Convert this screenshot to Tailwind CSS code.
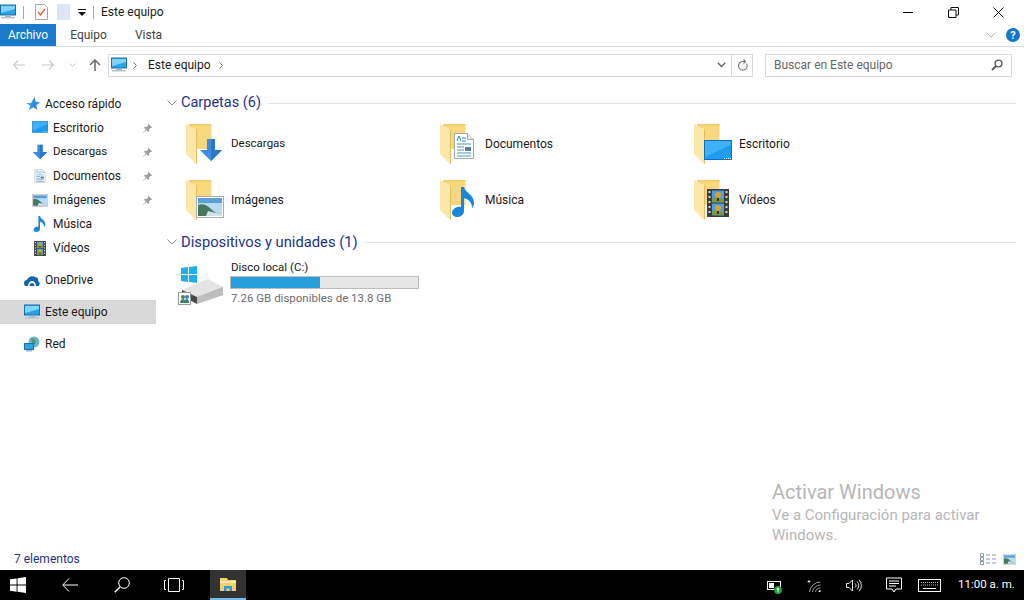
<!DOCTYPE html>
<html lang="es">
<head>
    <meta charset="UTF-8">
    <title>Este equipo</title>
    <script src="https://cdn.jsdelivr.net/npm/@tailwindcss/browser@4"></script>
</head>
<body class="bg-white overflow-hidden">
    <!-- shared icons -->
    <svg class="hidden">
        <symbol id="monitor" viewBox="0 0 16 16">
            <rect x="0.5" y="1" width="15" height="10" fill="#2aa3e8" stroke="#1a6fa8"/>
            <path d="M1 2h14v3L1 9z" fill="#7fd4f7"/>
            <rect x="5" y="11.5" width="6" height="1.5" fill="#9fb4c4"/>
            <rect x="1" y="13" width="14" height="1.5" fill="#b9c6d0"/>
        </symbol>
        <symbol id="desktop" viewBox="0 0 28 24">
            <rect x="0.5" y="0.5" width="27" height="19" fill="#1e9cf0" stroke="#0d6fc0"/>
            <path d="M1 1h26v4L1 17z" fill="#3fb2f7"/>
            <path d="M20 18h1v1h-1zM22 18h1v1h-1zM24 18h1v1h-1zM26 18h1v1h-1z" fill="#fff"/>
        </symbol>
        <symbol id="arrow" viewBox="0 0 24 24">
            <path d="M8 1h8v11h7L12 23 1 12h7z" fill="#3b8fdd"/>
            <path d="M12 1h4v11h7L12 23z" fill="#2a78c8"/>
        </symbol>
        <symbol id="doc" viewBox="0 0 20 26">
            <path d="M.5.5h13l6 6v19H.5z" fill="#fff" stroke="#a0a7ad"/>
            <path d="M13.5.5v6h6" fill="#e6ebef" stroke="#a0a7ad"/>
            <path d="M3 11h14M3 14h7M3 17h7M3 20h14M3 23h14" stroke="#4a94c6" stroke-width="1.2"/>
            <rect x="11" y="14" width="6" height="4" fill="#5b7d95"/>
            <path d="M3 8l2-5 2 5M8 5h4M8 8h4" stroke="#2b8ad8" fill="none"/>
        </symbol>
        <symbol id="picture" viewBox="0 0 28 22">
            <rect x="0.5" y="0.5" width="27" height="21" fill="#fff" stroke="#a9adb1"/>
            <rect x="2" y="2" width="24" height="18" fill="#b9dbf2"/>
            <path d="M2 2h24v5H2z" fill="#5a9fd6"/>
            <path d="M2 9c6-2 10 1 14 5s7 3 10 3v3H2z" fill="#47775f"/>
            <path d="M12 15c5 1 9 3 14 2v3H10z" fill="#cfe3ea"/>
        </symbol>
        <symbol id="music" viewBox="0 0 24 30">
            <path d="M9 0h3c1 6 10 7 10 16 0 2-1 4-2 5 0-6-4-9-8-10v13c0 4-4 6-7 6s-5-2-5-4c0-4 5-7 9-6z" fill="#1c86dc"/>
        </symbol>
        <symbol id="film" viewBox="0 0 22 28">
            <rect width="22" height="28" fill="#3d3d3d"/>
            <rect x="5" y="1.5" width="12" height="12" fill="#4e9fd8"/>
            <rect x="5" y="14.5" width="12" height="12" fill="#4e9fd8"/>
            <path d="M5 10l4-2 4 2 4-1v4H5zM5 23l4-2 4 2 4-1v4H5z" fill="#7a9a3e"/>
            <circle cx="11" cy="6" r="3" fill="#d9a12f"/><circle cx="11" cy="19" r="3" fill="#d9a12f"/>
            <path d="M10 9h2v3h-2zM10 22h2v3h-2z" fill="#4a2c12"/>
            <path d="M1.5 2h2v2h-2zM1.5 7h2v2h-2zM1.5 12h2v2h-2zM1.5 17h2v2h-2zM1.5 22h2v2h-2zM18.500 2h2v2h-2zM18.500 7h2v2h-2zM18.500 12h2v2h-2zM18.500 17h2v2h-2zM18.500 22h2v2h-2z" fill="#d6d6d6"/>
        </symbol>
        <symbol id="folder" viewBox="0 0 28 40">
            <path d="M4 0h22.500v25H4z" fill="#f6d881"/>
            <path d="M4 0h22.500v2H4z" fill="#f2cf74"/>
            <path d="M1 0l10 5v35L1 30z" fill="#fbe7a8"/>
            <path d="M11 5v35l1-.5V6z" fill="#e2bd61"/>
        </symbol>
        <symbol id="pin" viewBox="0 0 12 12">
            <path d="M7 1l4 4-1 .6-.7-.3L7.500 7.200 7.800 9 7 9.800 4.800 7.600 1.500 11l-.5-.5L4.400 7.200 2.200 5 3 4.200l1.800.3 1.900-1.800-.3-.7z" fill="#9a9a9a"/>
        </symbol>
        <symbol id="win" viewBox="0 0 16 16">
            <path d="M0 2.300 6.600 1.400V7.600H0zM7.500 1.300 16 0v7.600H7.500zM0 8.500h6.600v6.200L0 13.800zM7.500 8.500H16V16L7.500 14.800z" fill="currentColor"/>
        </symbol>
    </svg>

    <div class="w-[1024px] h-[600px] flex flex-col relative font-['Roboto',sans-serif] text-[12px] text-[#1a1a1a]">
        <!-- title bar -->
        <div class="h-6 flex items-center shrink-0">
            <svg class="w-4 h-4 ml-0 -mt-px"><use href="#monitor"/></svg>
            <div class="w-px h-[13px] bg-[#a8a8a8] ml-[7px]"></div>
            <svg class="w-[13px] h-4 ml-[11px]" viewBox="0 0 13 16">
                <path d="M.5.5h9l3 3v12H.5z" fill="#fff" stroke="#a5a5a5"/>
                <path d="M3 8l2.500 3L10 5" fill="none" stroke="#e2602f" stroke-width="1.300"/>
            </svg>
            <div class="w-[13px] h-[16px] ml-[9px] bg-[#dfe6f3]"></div>
            <svg class="w-2 h-2 ml-[8px] mt-px" viewBox="0 0 8 8">
                <path d="M0 0h8v1H0zM0 3h8L4 7z" fill="#111"/>
            </svg>
            <div class="w-px h-[13px] bg-[#a8a8a8] ml-[7px]"></div>
            <span class="ml-[7px]">Este equipo</span>
            <div class="ml-auto flex h-6 items-center pr-[3px]">
                <div class="w-[46px] flex justify-center"><div class="w-[10px] h-px bg-black"></div></div>
                <div class="w-[44px] flex justify-center">
                    <svg class="w-[11px] h-[11px]" viewBox="0 0 11 11"><path d="M.5 3h7.500v7.500H.5zM3 3V.5h7.500V8H8" fill="none" stroke="#111"/></svg>
                </div>
                <div class="w-[46px] flex justify-center">
                    <svg class="w-[11px] h-[11px]" viewBox="0 0 11 11"><path d="M.5.5l10 10M10.500.5l-10 10" stroke="#111"/></svg>
                </div>
            </div>
        </div>

        <!-- ribbon tabs -->
        <div class="h-[22px] flex shrink-0 border-b border-[#dadbdc] box-content items-stretch">
            <div class="w-14 bg-[#1979ca] text-white flex items-center justify-center">Archivo</div>
            <div class="w-[65px] text-[#444] flex items-center justify-center">Equipo</div>
            <div class="w-[55px] text-[#444] flex items-center justify-center">Vista</div>
            <div class="ml-auto flex items-center pr-[4px]">
                <svg class="w-[10px] h-[6px] mr-[10px]" viewBox="0 0 10 6"><path d="M.5.5 5 5 9.500.5" fill="none" stroke="#b5b5b5"/></svg>
                <div class="w-[14px] h-[14px] rounded-full bg-[#1475cf] text-white text-[11px] font-bold flex items-center justify-center leading-none">?</div>
            </div>
        </div>

        <!-- address row -->
        <div class="h-[38px] pb-[2px] flex items-center shrink-0 relative">
            <svg class="w-[12px] h-[10px] ml-[13px]" viewBox="0 0 12 10"><path d="M5 .5.800 5 5 9.500M1 5h11" fill="none" stroke="#c9c9c9" stroke-width="1.200"/></svg>
            <svg class="w-[12px] h-[10px] ml-[17px]" viewBox="0 0 12 10"><path d="M7 .5 11.200 5 7 9.500M11 5H0" fill="none" stroke="#c9c9c9" stroke-width="1.200"/></svg>
            <svg class="w-[7px] h-[4px] ml-[15px]" viewBox="0 0 7 4"><path d="M.5.500 3.500 3.500 6.500.5" fill="none" stroke="#c9c9c9"/></svg>
            <svg class="w-[12px] h-[12px] ml-[13px]" viewBox="0 0 12 12"><path d="M6 12V1M1 6l5-5 5 5" fill="none" stroke="#707070" stroke-width="1.600"/></svg>
            <div class="ml-[7px] w-[645px] h-[23px] border border-[#d9d9d9] flex items-center">
                <svg class="w-4 h-4 ml-[2px]"><use href="#monitor"/></svg>
                <svg class="w-1 h-[7px] ml-[6px]" viewBox="0 0 4 7"><path d="M.5.500 3.500 3.500.5 6.500" fill="none" stroke="#777"/></svg>
                <span class="ml-[11px]">Este equipo</span>
                <svg class="w-1 h-[7px] ml-[8px]" viewBox="0 0 4 7"><path d="M.5.500 3.500 3.500.5 6.500" fill="none" stroke="#777"/></svg>
                <svg class="w-[9px] h-[6px] ml-auto mr-[5px]" viewBox="0 0 9 6"><path d="M.8.800 4.500 4.500 8.200.8" fill="none" stroke="#606060" stroke-width="1.300"/></svg>
                <div class="w-px h-full bg-[#d9d9d9]"></div>
                <div class="w-[20px] flex justify-center">
                    <svg class="w-[11px] h-[12px]" viewBox="0 0 11 12"><path d="M9.500 4.500A4.300 4.300 0 1 1 5.500 2.500H8M6.500.5 8.500 2.500 6.500 4.500" fill="none" stroke="#777" stroke-width="1.100"/></svg>
                </div>
            </div>
            <div class="ml-[12px] w-[247px] h-[23px] border border-[#d9d9d9] flex items-center pl-[8px] text-[#666]">
                Buscar en Este equipo
                <svg class="w-[12px] h-[12px] ml-auto mr-[8px]" viewBox="0 0 12 12"><circle cx="7.500" cy="4.500" r="3.400" fill="none" stroke="#555" stroke-width="1.400"/><path d="M5 7 1 11" stroke="#555" stroke-width="1.800"/></svg>
            </div>
        </div>

        <!-- main -->
        <div class="flex-1 flex min-h-0">
            <!-- nav pane -->
            <div class="w-[156px] shrink-0 pt-[7px]">
                <div class="h-6 flex items-center pl-[26px]">
                    <svg class="w-[14px] h-[14px] mr-[5px]" viewBox="0 0 14 14"><path d="M8.500 0l1.200 4.600L14 5.500l-3.700 2.700L11.500 13 7.500 10.200 3 13l1.500-4.500L0 6l5 .2z" fill="#2f8fe0"/></svg>
                    Acceso rápido
                </div>
                <div class="h-6 flex items-center pl-[32px]">
                    <svg class="w-4 h-[14px] mr-[5px]"><use href="#desktop"/></svg>
                    Escritorio
                    <svg class="w-[11px] h-[11px] ml-auto mr-[3px]"><use href="#pin"/></svg>
                </div>
                <div class="h-6 flex items-center pl-[32px]">
                    <svg class="w-4 h-4 mr-[5px]"><use href="#arrow"/></svg>
                    <span class="text-[11.5px]">Descargas</span>
                    <svg class="w-[11px] h-[11px] ml-auto mr-[3px]"><use href="#pin"/></svg>
                </div>
                <div class="h-6 flex items-center pl-[32px]">
                    <svg class="w-4 h-[14px] mr-[5px]"><use href="#doc"/></svg>
                    Documentos
                    <svg class="w-[11px] h-[11px] ml-auto mr-[3px]"><use href="#pin"/></svg>
                </div>
                <div class="h-6 flex items-center pl-[32px]">
                    <svg class="w-4 h-[13px] mr-[5px]"><use href="#picture"/></svg>
                    Imágenes
                    <svg class="w-[11px] h-[11px] ml-auto mr-[3px]"><use href="#pin"/></svg>
                </div>
                <div class="h-6 flex items-center pl-[32px]">
                    <svg class="w-4 h-4 mr-[5px]"><use href="#music"/></svg>
                    Música
                </div>
                <div class="h-6 flex items-center pl-[32px]">
                    <svg class="w-4 h-[15px] mr-[5px]"><use href="#film"/></svg>
                    Vídeos
                </div>
                <div class="h-6 mt-2 flex items-center pl-[24px]">
                    <svg class="w-4 h-[11px] mr-[5px]" viewBox="0 0 16 11"><path d="M1 11C-1 8 0 5 3 5c1-3 5-5 8-3 2 0 4 2 3 4 2 1 2 3 1 5z" fill="#1464a8"/><path d="M4 11c0-3 2-5 4-5s4 2 4 5" fill="#fff"/><path d="M5.500 11c0-2 1-3 2.500-3s2.500 1 2.500 3" fill="#1464a8"/></svg>
                    OneDrive
                </div>
                <div class="h-6 mt-2 flex items-center pl-[24px] bg-[#d9d9d9]">
                    <svg class="w-4 h-4 mr-[5px]"><use href="#monitor"/></svg>
                    Este equipo
                </div>
                <div class="h-6 mt-2 flex items-center pl-[24px]">
                    <svg class="w-4 h-4 mr-[5px]" viewBox="0 0 16 16">
                        <circle cx="10" cy="6" r="5.500" fill="#6db4dc"/><path d="M7 2c3 0 5 2 5 4s-3 3-4 1z" fill="#4f9a6a"/>
                        <rect x="0.500" y="7.500" width="9" height="6" fill="#2aa3e8" stroke="#1a6fa8"/><rect x="2" y="14" width="6" height="1.500" fill="#a5b5c2"/>
                    </svg>
                    Red
                </div>
            </div>

            <!-- content -->
            <div class="flex-1 pl-[11px] pt-2">
                <div class="h-5 flex items-center text-[#1e3287]">
                    <svg class="w-[10px] h-[6px]" viewBox="0 0 10 6"><path d="M.5.500 5 5 9.500.5" fill="none" stroke="#8a8a8a"/></svg>
                    <span class="ml-1 text-[14.500px]">Carpetas (6)</span>
                    <div class="flex-1 h-px bg-[#e2e2e2] ml-[7px] mr-2"></div>
                </div>
                <div class="grid grid-cols-[254px_254px_254px] ml-[18px] mt-[3px]">
                    <div class="h-14 flex items-center">
                        <div class="relative w-[46px] h-10">
                            <svg class="w-7 h-10"><use href="#folder"/></svg>
                            <svg class="absolute left-[14px] top-[14px] w-6 h-6"><use href="#arrow"/></svg>
                        </div>
                        <span class="text-[11.5px]">Descargas</span>
                    </div>
                    <div class="h-14 flex items-center">
                        <div class="relative w-[46px] h-10">
                            <svg class="w-7 h-10"><use href="#folder"/></svg>
                            <svg class="absolute left-[15px] top-[9px] w-5 h-[26px]"><use href="#doc"/></svg>
                        </div>
                        Documentos
                    </div>
                    <div class="h-14 flex items-center">
                        <div class="relative w-[46px] h-10">
                            <svg class="w-7 h-10"><use href="#folder"/></svg>
                            <svg class="absolute left-[11px] top-[16px] w-7 h-6"><use href="#desktop"/></svg>
                        </div>
                        Escritorio
                    </div>
                    <div class="h-14 flex items-center">
                        <div class="relative w-[46px] h-10">
                            <svg class="w-7 h-10"><use href="#folder"/></svg>
                            <svg class="absolute left-[11px] top-[16px] w-7 h-[22px]"><use href="#picture"/></svg>
                        </div>
                        Imágenes
                    </div>
                    <div class="h-14 flex items-center">
                        <div class="relative w-[46px] h-10">
                            <svg class="w-7 h-10"><use href="#folder"/></svg>
                            <svg class="absolute left-[13px] top-[7px] w-6 h-[30px]"><use href="#music"/></svg>
                        </div>
                        Música
                    </div>
                    <div class="h-14 flex items-center">
                        <div class="relative w-[46px] h-10">
                            <svg class="w-7 h-10"><use href="#folder"/></svg>
                            <svg class="absolute left-[14px] top-[9px] w-[22px] h-7"><use href="#film"/></svg>
                        </div>
                        Vídeos
                    </div>
                </div>
                <div class="h-5 mt-1 flex items-center text-[#1e3287]">
                    <svg class="w-[10px] h-[6px]" viewBox="0 0 10 6"><path d="M.5.500 5 5 9.500.5" fill="none" stroke="#8a8a8a"/></svg>
                    <span class="ml-1 text-[14.750px]">Dispositivos y unidades (1)</span>
                    <div class="flex-1 h-px bg-[#e2e2e2] ml-[7px] mr-2"></div>
                </div>
                <div class="flex ml-[11px] mt-[7px]">
                    <svg class="w-[46px] h-[46px] mt-[5px]" viewBox="0 0 46 46">
                        <path d="M3 4l7-1v7H3zM11 3l8-1v8h-8zM3 11h7v7l-7-1zM11 11h8v8l-8-1z" fill="#1eaee8"/>
                        <path d="M4 26 30 15l15 8v8L19 40 4 32z" fill="#e4e4e4"/>
                        <path d="M4 26l15 7v7L4 32z" fill="#4a4a4a"/>
                        <path d="M19 33 45 23v8L19 40z" fill="#bdbdbd"/>
                        <rect x="0.500" y="28.500" width="12" height="12" fill="#fff" stroke="#9a9a9a"/>
                        <circle cx="5" cy="33" r="2" fill="#4a7d5a"/><circle cx="9" cy="33" r="2" fill="#3b7fb8"/>
                        <path d="M2 39c0-3 2-4 3-4s3 1 3 4zM6 39c0-3 2-4 3-4s2 1 2 4z" fill="#3f7f6a"/>
                    </svg>
                    <div class="ml-[7px] -mt-[1px]">
                        <div class="h-[18px] leading-[18px] text-[11.500px]">Disco local (C:)</div>
                        <div class="w-[189px] h-[13px] -ml-px border border-[#bcbcbc] bg-[#e6e6e6]">
                            <div class="h-full bg-[#26a0da]" style="width: 47.500%"></div>
                        </div>
                        <div class="h-[18px] leading-[18px] text-[11.500px] text-[#6d6d6d]">7.26 GB disponibles de 13.8 GB</div>
                    </div>
                </div>
            </div>
        </div>

        <!-- status bar -->
        <div class="h-[22px] flex items-center shrink-0 pl-[14px] text-[#1e3287]">
            7 elementos
            <div class="ml-auto flex items-center gap-[7px] pr-[8px]">
                <svg class="w-4 h-[12px]" viewBox="0 0 16 12"><path d="M.5.5h3v3h-3zM.5 4.500h3v3h-3zM.5 8.500h3v3h-3z" fill="none" stroke="#8a9ba8"/><path d="M6 2h4M12 2h4M6 6h4M12 6h4M6 10h4M12 10h4" stroke="#8a9ba8"/></svg>
                <svg class="w-[13px] h-[11px]"><use href="#picture"/></svg>
            </div>
        </div>

        <!-- taskbar -->
        <div class="h-[30px] bg-black text-white flex items-center shrink-0">
            <svg class="w-4 h-4 ml-[10px] text-white"><use href="#win"/></svg>
            <svg class="w-4 h-[14px] ml-[36px]" viewBox="0 0 16 14"><path d="M7 .5.800 7 7 13.500M1 7h15" fill="none" stroke="#fff"/></svg>
            <svg class="w-4 h-4 ml-[36px]" viewBox="0 0 16 16"><circle cx="10" cy="6" r="5.300" fill="none" stroke="#fff"/><path d="M6.200 9.800.8 15.200" stroke="#fff" stroke-width="1.300"/></svg>
            <svg class="w-5 h-[14px] ml-[34px]" viewBox="0 0 20 14"><path d="M4.500.5h11v13h-11zM2 2.500H.5v9H2M18 2.500h1.500v9H18" fill="none" stroke="#fff"/></svg>
            <div class="w-9 h-full ml-[26px] bg-[#333] border-b-2 border-[#76b9ed] flex items-center justify-center">
                <svg class="w-4 h-[14px]" viewBox="0 0 16 14">
                    <path d="M0 1h7l1 2h8v11H0z" fill="#f5cf6a"/><path d="M0 4h16v2H0z" fill="#fbe7a5"/>
                    <path d="M4 14V9h8v5h-2.500v-2.500h-3V14z" fill="#2a9ad6"/>
                </svg>
            </div>
            <div class="ml-auto flex items-center h-full pr-[11px]">
                <svg class="w-[15px] h-[14px] mr-[24px] mt-[3px]" viewBox="0 0 15 14">
                    <rect x="0.500" y="1.500" width="13" height="8" fill="#000" stroke="#fff"/><rect x="2" y="3" width="5" height="5" fill="#fff"/>
                    <circle cx="11" cy="10" r="4" fill="#1f9a3c"/><path d="M11 7.500v5M9.500 9h3" stroke="#fff"/>
                </svg>
                <svg class="w-4 h-4 mr-[24px]" viewBox="0 0 15 16">
                    <path d="M2 4l1 1M2 5l1-1M2.500 3v3M1 4.500h3" stroke="#fff" stroke-width=".7"/>
                    <path d="M3 15A11 11 0 0 1 14 5M6 15a8 8 0 0 1 8-7M9 15a5 5 0 0 1 5-4" fill="none" stroke="#999"/>
                    <path d="M12 15a2 2 0 0 1 2-2v2z" fill="#fff"/>
                </svg>
                <svg class="w-4 h-[13px] mr-[24px]" viewBox="0 0 16 13"><path d="M.5 4.500h2.500L6.500 1v11L3 8.500H.5zM9 4.500a2.500 2.500 0 0 1 0 4M11 2.500a5.500 5.500 0 0 1 0 8M13 .8a8 8 0 0 1 0 11.400" fill="none" stroke="#fff" stroke-width=".9"/></svg>
                <svg class="w-4 h-4 mr-[16px]" viewBox="0 0 16 16"><path d="M.5 1h15v11H10L8 15l-2-3H.5zM3 4h10M3 6.500h10M3 9h7" fill="none" stroke="#fff"/></svg>
                <svg class="w-[23px] h-[13px] mr-[17px]" viewBox="0 0 23 13"><rect x="0.500" y="0.500" width="22" height="12" fill="none" stroke="#fff"/><path d="M3 3.500h17M3 6h17" stroke="#bbb" stroke-dasharray="1 1"/><path d="M5 9.500h13" stroke="#fff"/></svg>
                <span class="w-[55px] text-[11.500px] whitespace-nowrap">11:00 a. m.</span>
            </div>
        </div>

        <!-- activation watermark -->
        <div class="absolute left-[772px] top-[480px] text-[#b6b6b6] text-[15px] leading-[20px]">
            <div class="text-[20px] leading-[24px] mb-[1px]">Activar Windows</div>
            <div>Ve a Configuración para activar</div>
            <div>Windows.</div>
        </div>
    </div>
</body>
</html>
